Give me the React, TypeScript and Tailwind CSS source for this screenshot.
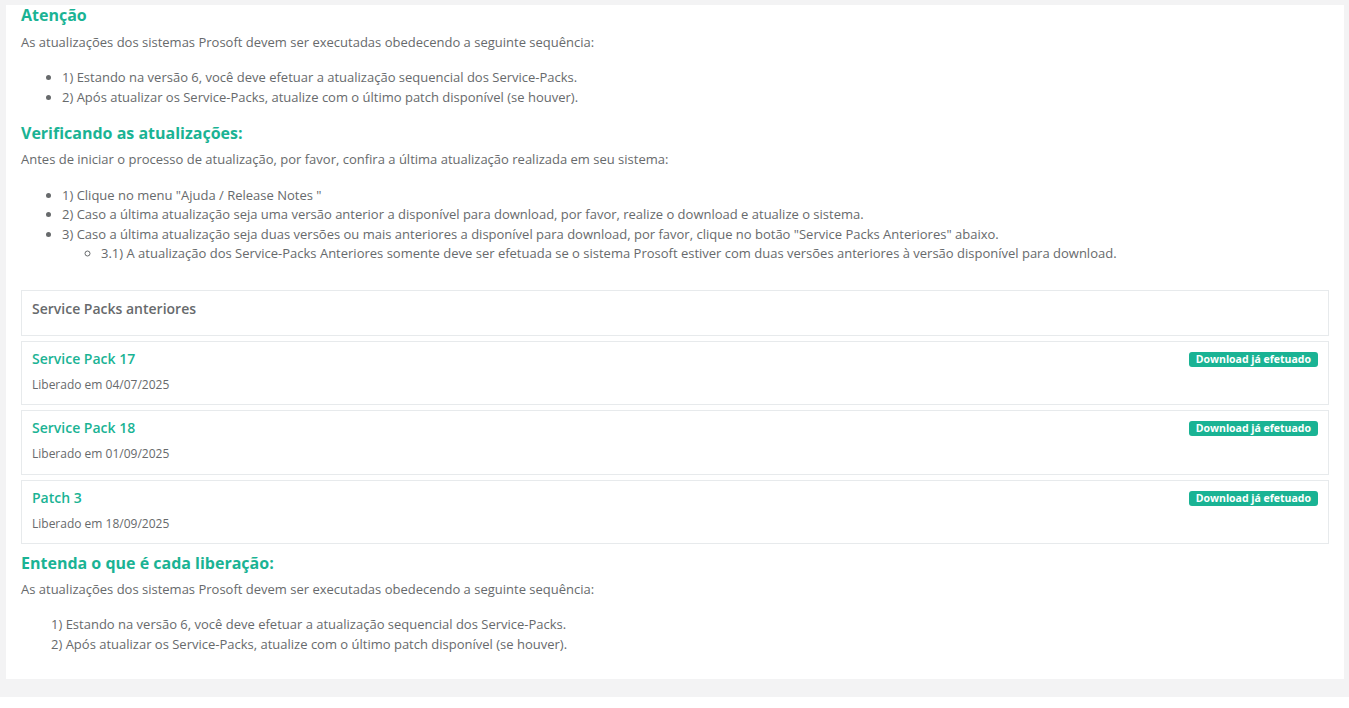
import React from 'react';

const releases = [
  { title: 'Service Pack 17', date: '04/07/2025' },
  { title: 'Service Pack 18', date: '01/09/2025' },
  { title: 'Patch 3', date: '18/09/2025' },
];

const Heading: React.FC<{ children: React.ReactNode; className?: string }> = ({ children, className }) => (
  <h3 className={`text-[16px] leading-[20px] font-bold text-[#1ab394] ${className ?? ''}`}>{children}</h3>
);

export default function App() {
  return (
    <div
      className="bg-white text-[13px] leading-[19.5px] text-[#676a6c]"
      style={{ fontFamily: '"Open Sans", "Noto Sans", sans-serif' }}
    >
      <div className="bg-[#f3f3f4] pt-[5px] pb-[18px] pl-[6px] pr-[5px]">
        <div className="bg-white px-[15px] pb-[25px]">
          <Heading>Atenção</Heading>
          <p className="mt-[8px]">
            As atualizações dos sistemas Prosoft devem ser executadas obedecendo a seguinte sequência:
          </p>
          <ul className="mt-[15.5px] list-disc pl-[41px]">
            <li>1) Estando na versão 6, você deve efetuar a atualização sequencial dos Service-Packs.</li>
            <li>2) Após atualizar os Service-Packs, atualize com o último patch disponível (se houver).</li>
          </ul>

          <Heading className="mt-[16px]">Verificando as atualizações:</Heading>
          <p className="mt-[7px]">
            Antes de iniciar o processo de atualização, por favor, confira a última atualização realizada em seu sistema:
          </p>
          <ul className="mt-[16px] list-disc pl-[41px]">
            <li>1) Clique no menu "Ajuda / Release Notes "</li>
            <li>
              2) Caso a última atualização seja uma versão anterior a disponível para download, por favor, realize o
              download e atualize o sistema.
            </li>
            <li>
              3) Caso a última atualização seja duas versões ou mais anteriores a disponível para download, por favor,
              clique no botão "Service Packs Anteriores" abaixo.
              <ul className="list-[circle] pl-[39px]">
                <li>
                  3.1) A atualização dos Service-Packs Anteriores somente deve ser efetuada se o sistema Prosoft estiver
                  com duas versões anteriores à versão disponível para download.
                </li>
              </ul>
            </li>
          </ul>

          <div className="mt-[26px] flex flex-col gap-[5px]">
            <div className="border border-[#e7eaec] px-[10px] pt-[11px] pb-[19px]">
              <h5 className="text-[14px] leading-[14px] font-semibold text-[#676a6c]">Service Packs anteriores</h5>
            </div>
            {releases.map((r) => (
              <div key={r.title} className="border border-[#e7eaec] p-[10px]">
                <div className="flex items-start justify-between">
                  <h5 className="text-[14px] leading-[14px] font-semibold text-[#1ab394]">{r.title}</h5>
                  <span className="rounded-[3px] bg-[#1ab394] px-[7px] text-[10.5px] leading-[15px] font-bold text-white">
                    Download já efetuado
                  </span>
                </div>
                <p className="mt-[8px] text-[12px] leading-[19.5px]">Liberado em {r.date}</p>
              </div>
            ))}
          </div>

          <Heading className="mt-[9px]">Entenda o que é cada liberação:</Heading>
          <p className="mt-[7px]">
            As atualizações dos sistemas Prosoft devem ser executadas obedecendo a seguinte sequência:
          </p>
          <ul className="mt-[15.5px] list-none pl-[30px]">
            <li>1) Estando na versão 6, você deve efetuar a atualização sequencial dos Service-Packs.</li>
            <li>2) Após atualizar os Service-Packs, atualize com o último patch disponível (se houver).</li>
          </ul>
        </div>
      </div>
    </div>
  );
}
